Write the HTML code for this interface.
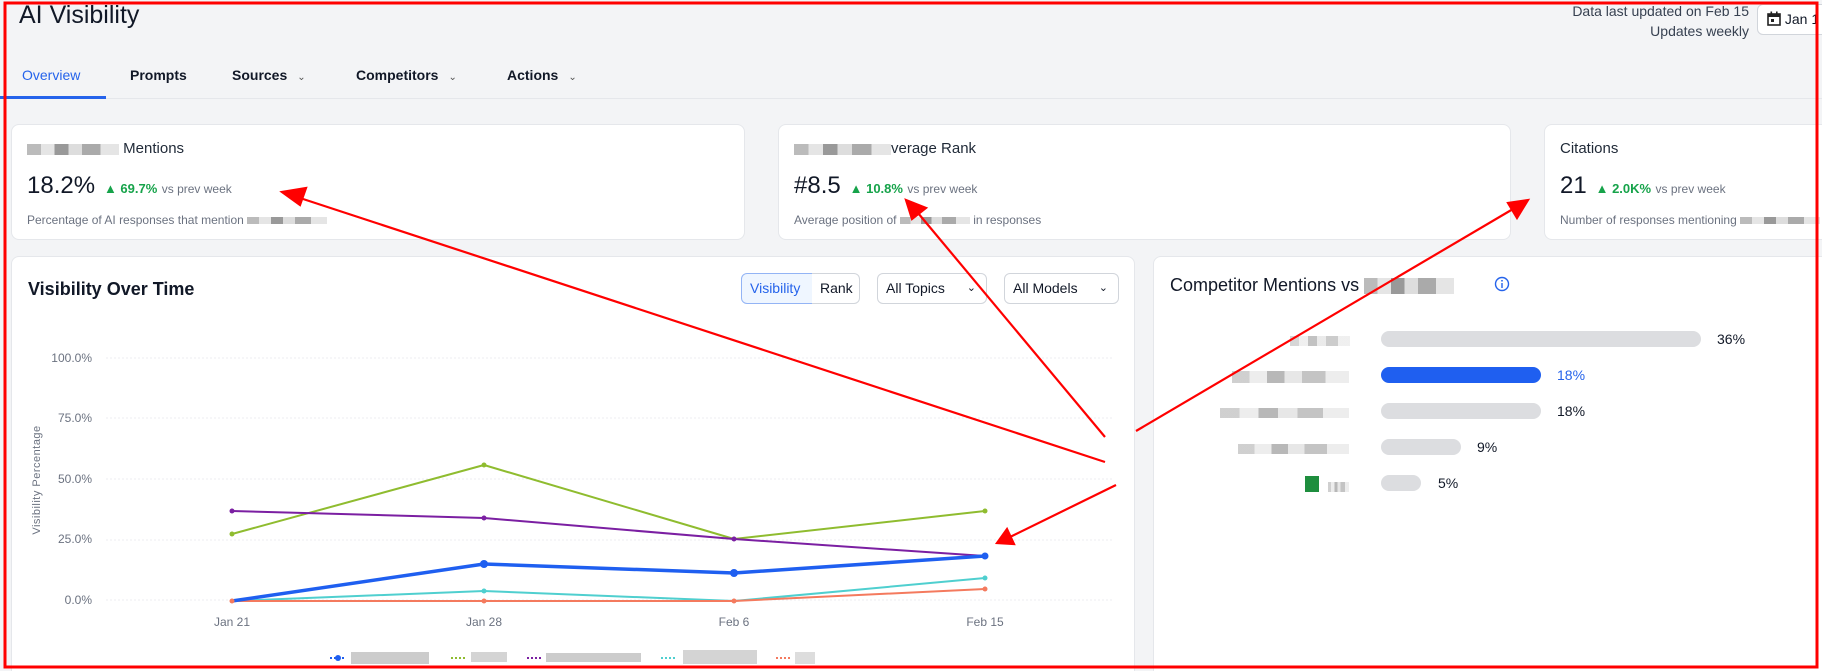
<!DOCTYPE html>
<html style="width:1822px;height:671px;overflow:hidden"><head><meta charset="utf-8"><style>
*{box-sizing:border-box;margin:0;padding:0}
body{width:1822px;height:671px;overflow:hidden;background:#f3f4f6;font-family:"Liberation Sans",sans-serif;color:#111827;position:relative}
.abs{position:absolute}
.card{position:absolute;background:#fff;border:1px solid #e5e7eb;border-radius:8px}
.blur{display:inline-block;height:11px;background:linear-gradient(90deg,#bbb 0 15%,#e5e5e5 15% 30%,#999 30% 45%,#ddd 45% 60%,#aaa 60% 80%,#e5e5e5 80%);vertical-align:middle}
.tab{position:absolute;top:67px;font-size:14px;font-weight:bold;color:#111827}
.chev{font-size:10px;margin-left:10px;color:#555;font-weight:normal}
.ctitle{font-size:15px;color:#1f2937}
.val{font-size:24px;color:#111827}
.up{font-size:13px;color:#16a34a;font-weight:bold}
.vs{font-size:12px;color:#6b7280;font-weight:normal}
.sub{font-size:12px;color:#6b7280}
.btn{position:absolute;top:273px;height:31px;border:1px solid #d1d5db;border-radius:6px;font-size:14px;line-height:29px;padding-left:8px;background:#fff}
.ylab{position:absolute;right:1730px;font-size:12px;color:#6b7280;text-align:right}
.xlab{position:absolute;top:615px;font-size:12px;color:#6b7280;transform:translateX(-50%)}
.track{position:absolute;left:1381px;height:16px;border-radius:8px;background:#dcdde0}
.pct{position:absolute;font-size:14px;color:#111827}
</style></head><body>
<div class="abs" style="left:19px;top:1px;font-size:25px;color:#111827">AI Visibility</div>
<div class="abs" style="right:73px;top:1px;font-size:14px;color:#374151;text-align:right;line-height:20px">Data last updated on Feb 15<br>Updates weekly</div>
<div class="abs" style="left:1757px;top:4px;width:80px;height:31px;background:#fff;border:1px solid #d1d5db;border-radius:6px;font-size:14px;line-height:29px;padding-left:9px">
<svg width="14" height="15" viewBox="0 0 14 15" style="vertical-align:-2px"><rect x="1" y="3" width="12" height="11" fill="none" stroke="#222" stroke-width="1.6"/><rect x="1" y="3" width="12" height="3" fill="#222"/><rect x="3.5" y="0.5" width="1.6" height="3" fill="#222"/><rect x="9" y="0.5" width="1.6" height="3" fill="#222"/><rect x="4" y="8" width="3" height="3" fill="#222"/></svg> Jan 1</div>
<div class="tab" style="left:22px;color:#2563eb;font-weight:normal">Overview</div>
<div class="tab" style="left:130px">Prompts</div>
<div class="tab" style="left:232px">Sources<span class="chev">&#8964;</span></div>
<div class="tab" style="left:356px">Competitors<span class="chev">&#8964;</span></div>
<div class="tab" style="left:507px">Actions<span class="chev">&#8964;</span></div>
<div class="abs" style="left:0;top:98px;width:1822px;height:1px;background:#e5e7eb"></div>
<div class="abs" style="left:0;top:96px;width:106px;height:3px;background:#2563eb"></div>

<div class="card" style="left:11px;top:124px;width:734px;height:116px">
<div class="abs ctitle" style="left:15px;top:15px"><span class="blur" style="width:92px"></span> Mentions</div>
<div class="abs" style="left:15px;top:47px"><span class="val">18.2%</span> &nbsp;<span class="up">&#9650; 69.7%</span> <span class="vs">vs prev week</span></div>
<div class="abs sub" style="left:15px;top:88px">Percentage of AI responses that mention <span class="blur" style="width:80px;height:7px"></span></div>
</div>
<div class="card" style="left:778px;top:124px;width:733px;height:116px">
<div class="abs ctitle" style="left:15px;top:15px"><span class="blur" style="width:97px"></span>verage Rank</div>
<div class="abs" style="left:15px;top:47px"><span class="val">#8.5</span> &nbsp;<span class="up">&#9650; 10.8%</span> <span class="vs">vs prev week</span></div>
<div class="abs sub" style="left:15px;top:88px">Average position of <span class="blur" style="width:70px;height:7px"></span> in responses</div>
</div>
<div class="card" style="left:1544px;top:124px;width:300px;height:116px">
<div class="abs ctitle" style="left:15px;top:15px">Citations</div>
<div class="abs" style="left:15px;top:47px"><span class="val">21</span> &nbsp;<span class="up">&#9650; 2.0K%</span> <span class="vs">vs prev week</span></div>
<div class="abs sub" style="left:15px;top:88px">Number of responses mentioning <span class="blur" style="width:80px;height:7px"></span></div>
</div>

<div class="card" style="left:11px;top:256px;width:1124px;height:430px">
<div class="abs" style="left:16px;top:22px;font-size:18px;font-weight:bold;color:#111827">Visibility Over Time</div>
</div>
<div class="btn" style="left:741px;width:72px;background:#eff6ff;border-color:#93b4f5;color:#2563eb;border-radius:6px 0 0 6px">Visibility</div>
<div class="btn" style="left:812px;width:48px;border-radius:0 6px 6px 0;border-left:none">Rank</div>
<div class="btn" style="left:877px;width:110px">All Topics<span style="position:absolute;right:10px;font-size:11px">&#8964;</span></div>
<div class="btn" style="left:1004px;width:115px">All Models<span style="position:absolute;right:10px;font-size:11px">&#8964;</span></div>

<div class="ylab" style="top:351px">100.0%</div>
<div class="ylab" style="top:411px">75.0%</div>
<div class="ylab" style="top:472px">50.0%</div>
<div class="ylab" style="top:532px">25.0%</div>
<div class="ylab" style="top:593px">0.0%</div>
<div class="abs" style="left:37px;top:480px;font-size:11px;color:#6b7280;transform:translate(-50%,-50%) rotate(-90deg);white-space:nowrap;letter-spacing:0.5px">Visibility Percentage</div>
<div class="xlab" style="left:232px">Jan 21</div>
<div class="xlab" style="left:484px">Jan 28</div>
<div class="xlab" style="left:734px">Feb 6</div>
<div class="xlab" style="left:985px">Feb 15</div>

<svg class="abs" style="left:0;top:0" width="1822" height="671">
<g stroke="#eceef1" stroke-dasharray="2 2" stroke-width="1">
<line x1="106" y1="358" x2="1112" y2="358"/><line x1="106" y1="418" x2="1112" y2="418"/><line x1="106" y1="479" x2="1112" y2="479"/><line x1="106" y1="540" x2="1112" y2="540"/><line x1="106" y1="600" x2="1112" y2="600"/></g>
<g fill="none" stroke-linejoin="round">
<polyline stroke="#8fbc2f" stroke-width="2" points="232,534 484,465 734,539 985,511"/>
<polyline stroke="#7b1fa2" stroke-width="2" points="232,511 484,518 734,539 985,556"/>
<polyline stroke="#4fcfcf" stroke-width="2" points="232,601 484,591 734,601 985,578"/>
<polyline stroke="#f47a5e" stroke-width="2" points="232,601 484,601 734,601 985,589"/>
<polyline stroke="#1f5ff0" stroke-width="3.5" points="232,601 484,564 734,573 985,556"/>
</g>
<g fill="#8fbc2f"><circle cx="232" cy="534" r="2.5"/><circle cx="484" cy="465" r="2.5"/><circle cx="985" cy="511" r="2.5"/></g>
<g fill="#7b1fa2"><circle cx="232" cy="511" r="2.5"/><circle cx="484" cy="518" r="2.5"/><circle cx="734" cy="539" r="2.5"/><circle cx="985" cy="556" r="2.5"/></g>
<g fill="#4fcfcf"><circle cx="484" cy="591" r="2.5"/><circle cx="985" cy="578" r="2.5"/></g>
<g fill="#f47a5e"><circle cx="232" cy="601" r="2.5"/><circle cx="484" cy="601" r="2.5"/><circle cx="734" cy="601" r="2.5"/><circle cx="985" cy="589" r="2.5"/></g>
<g fill="#1f5ff0"><circle cx="484" cy="564" r="4"/><circle cx="734" cy="573" r="4"/><circle cx="985" cy="556" r="3.5"/></g>
<g stroke-width="2"><line x1="330" y1="658" x2="346" y2="658" stroke="#1f5ff0" stroke-dasharray="2 2"/><circle cx="338" cy="658" r="3" fill="#1f5ff0"/>
<line x1="451" y1="658" x2="465" y2="658" stroke="#8fbc2f" stroke-dasharray="2 2"/>
<line x1="527" y1="658" x2="541" y2="658" stroke="#7b1fa2" stroke-dasharray="2 2"/>
<line x1="661" y1="658" x2="675" y2="658" stroke="#4fcfcf" stroke-dasharray="2 2"/>
<line x1="776" y1="658" x2="790" y2="658" stroke="#f47a5e" stroke-dasharray="2 2"/></g>
<g fill="#aaa"><rect x="351" y="652" width="78" height="12" opacity=".6"/><rect x="471" y="652" width="36" height="10" opacity=".5"/><rect x="546" y="653" width="95" height="9" opacity=".6"/><rect x="683" y="650" width="74" height="14" opacity=".5"/><rect x="795" y="652" width="20" height="12" opacity=".4"/></g>
</svg>

<div class="card" style="left:1153px;top:256px;width:700px;height:430px">
<div class="abs" style="left:16px;top:18px;font-size:18px;color:#111827">Competitor Mentions vs <span class="blur" style="width:90px;height:16px"></span></div>
<svg class="abs" style="left:340px;top:19px" width="16" height="16"><circle cx="8" cy="8" r="6.5" fill="none" stroke="#2563eb" stroke-width="1.4"/><rect x="7.3" y="7" width="1.4" height="5" fill="#2563eb"/><circle cx="8" cy="4.8" r="0.9" fill="#2563eb"/></svg>
</div>
<div class="abs" style="left:1290px;top:332px;width:60px;height:14px"><span class="blur" style="width:60px;height:10px;opacity:.6"></span></div>
<div class="abs" style="left:1232px;top:368px"><span class="blur" style="width:117px;height:12px;opacity:.7"></span></div>
<div class="abs" style="left:1220px;top:404px"><span class="blur" style="width:129px;height:10px;opacity:.7"></span></div>
<div class="abs" style="left:1238px;top:440px"><span class="blur" style="width:111px;height:10px;opacity:.7"></span></div>
<div class="abs" style="left:1305px;top:476px;width:14px;height:16px;background:#1e8e3e"></div>
<div class="abs" style="left:1328px;top:478px"><span class="blur" style="width:21px;height:10px;opacity:.7"></span></div>
<div class="track" style="top:331px;width:320px"></div><div class="pct" style="left:1717px;top:331px">36%</div>
<div class="track" style="top:367px;width:160px;background:#1f5ff0"></div><div class="pct" style="left:1557px;top:367px;color:#2563eb">18%</div>
<div class="track" style="top:403px;width:160px"></div><div class="pct" style="left:1557px;top:403px">18%</div>
<div class="track" style="top:439px;width:80px"></div><div class="pct" style="left:1477px;top:439px">9%</div>
<div class="track" style="top:475px;width:40px"></div><div class="pct" style="left:1438px;top:475px">5%</div>

<svg class="abs" style="left:0;top:0" width="1822" height="671">
<rect x="5" y="3" width="1812" height="664" fill="none" stroke="#ff0000" stroke-width="3"/>
<g stroke="#ff0000" stroke-width="2.2" fill="#ff0000">
<line x1="1105" y1="462" x2="300" y2="198"/><polygon points="282,192 306,188 300,205"/>
<line x1="1105" y1="437" x2="918" y2="213"/><polygon points="906,200 926,208 912,219"/>
<line x1="1136" y1="431" x2="1513" y2="209"/><polygon points="1528,200 1517,218 1508,203"/>
<line x1="1116" y1="485" x2="1010" y2="537"/><polygon points="997,543 1007,529 1014,544"/>
</g>
</svg>
</body></html>
